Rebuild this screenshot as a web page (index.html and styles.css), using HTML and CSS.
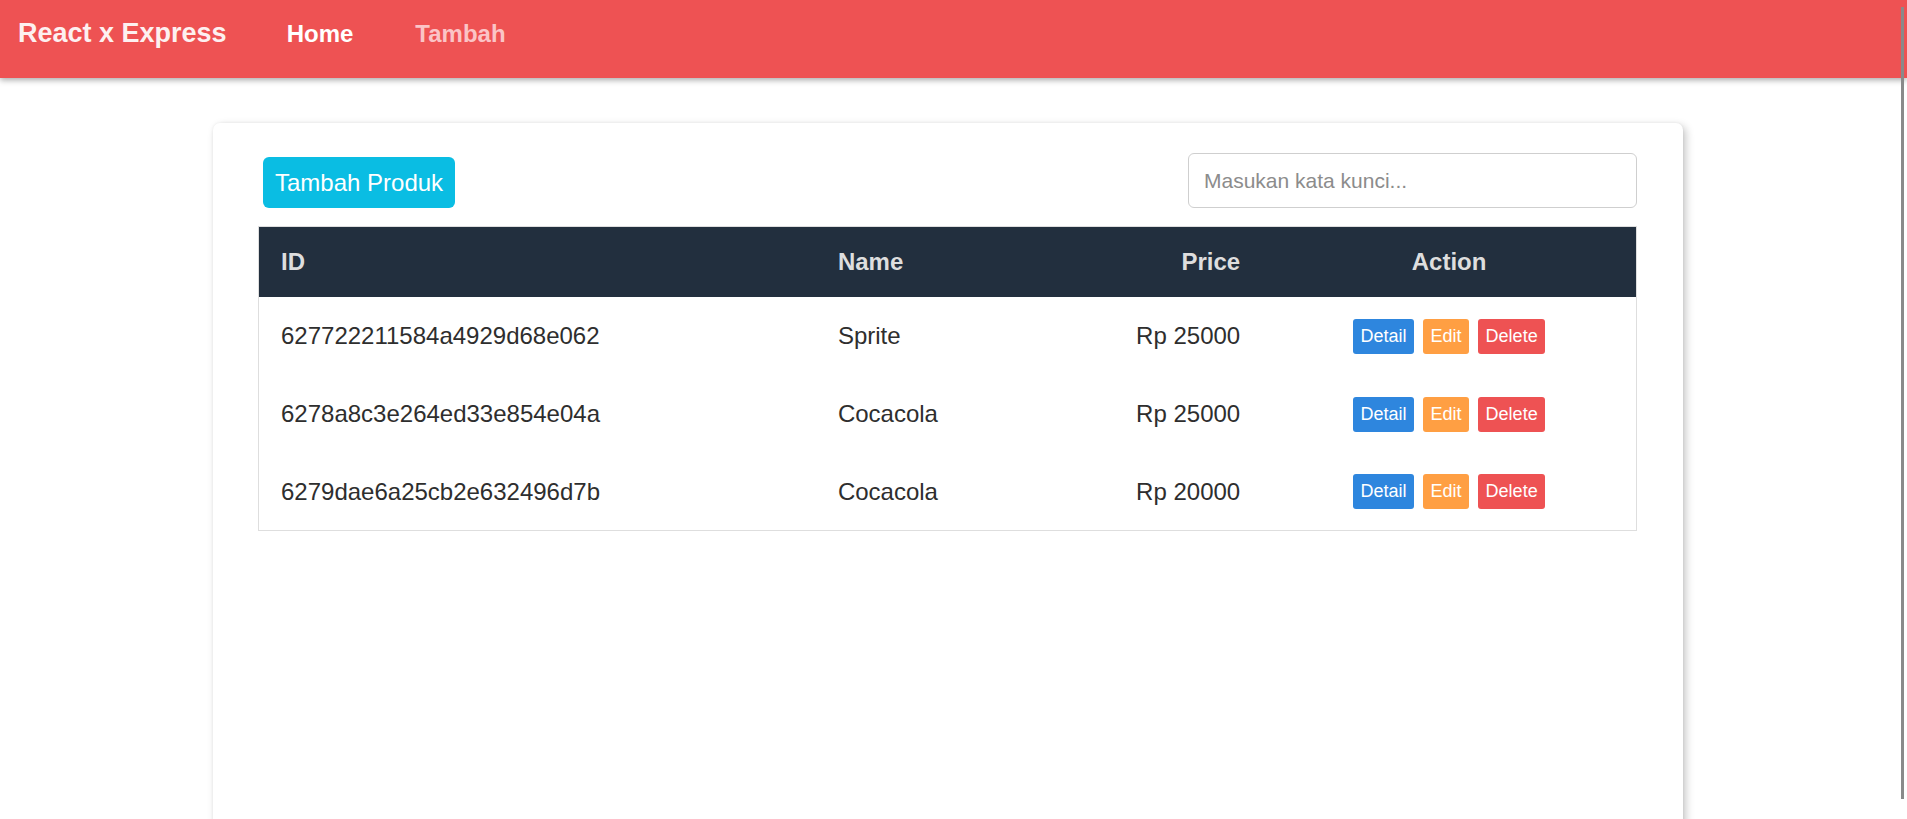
FILE: index.html
```html
<!DOCTYPE html>
<html lang="id">
<head>
<meta charset="utf-8">
<title>React x Express</title>
<link rel="stylesheet" href="styles.css">
</head>
<body>
<nav class="navbar">
  <a class="brand" href="#">React x Express</a>
  <a class="nav-link" href="#">Home</a>
  <a class="nav-link nav-link-muted" href="#">Tambah</a>
</nav>
<main class="main">
  <section class="card">
    <div class="toolbar">
      <button class="btn-add" type="button">Tambah Produk</button>
      <input class="search" type="text" placeholder="Masukan kata kunci...">
    </div>
    <table class="table">
      <colgroup>
        <col class="col-id">
        <col class="col-name">
        <col class="col-price">
        <col class="col-action">
      </colgroup>
      <thead>
        <tr>
          <th class="left">ID</th>
          <th class="left">Name</th>
          <th class="right">Price</th>
          <th class="center">Action</th>
        </tr>
      </thead>
      <tbody>
        <tr>
          <td>627722211584a4929d68e062</td>
          <td>Sprite</td>
          <td class="right">Rp 25000</td>
          <td class="center"><div class="actions"><button class="btn btn-detail">Detail</button><button class="btn btn-edit">Edit</button><button class="btn btn-delete">Delete</button></div></td>
        </tr>
        <tr>
          <td>6278a8c3e264ed33e854e04a</td>
          <td>Cocacola</td>
          <td class="right">Rp 25000</td>
          <td class="center"><div class="actions"><button class="btn btn-detail">Detail</button><button class="btn btn-edit">Edit</button><button class="btn btn-delete">Delete</button></div></td>
        </tr>
        <tr>
          <td>6279dae6a25cb2e632496d7b</td>
          <td>Cocacola</td>
          <td class="right">Rp 20000</td>
          <td class="center"><div class="actions"><button class="btn btn-detail">Detail</button><button class="btn btn-edit">Edit</button><button class="btn btn-delete">Delete</button></div></td>
        </tr>
      </tbody>
    </table>
  </section>
</main>
<div class="scroll-thumb"></div>
</body>
</html>
```

FILE: styles.css
```css
* { box-sizing: border-box; }

html, body {
  margin: 0;
  padding: 0;
}

body {
  font-family: "Liberation Sans", Arial, sans-serif;
  background: #ffffff;
  color: #2e2e2e;
  height: 819px;
  overflow: hidden;
}

.navbar {
  position: relative;
  z-index: 2;
  height: 78px;
  background: #ee5253;
  display: flex;
  align-items: baseline;
  padding: 13px 0 0 18px;
  box-shadow: 0 2px 6px rgba(0, 0, 0, 0.35);
}

.brand {
  font-size: 27px;
  line-height: 40px;
  font-weight: bold;
  color: #fdf0f0;
  text-decoration: none;
  margin-right: 60px;
}

.nav-link {
  font-size: 24px;
  line-height: 40px;
  font-weight: bold;
  color: #ffffff;
  text-decoration: none;
  margin-right: 62px;
}

.nav-link-muted {
  color: #fbc4c6;
}

.main {
  padding: 45px 11px 0 0;
}

.card {
  width: 1470px;
  height: 760px;
  margin: 0 auto;
  background: #ffffff;
  border-radius: 7px;
  box-shadow: 3px 3px 9px rgba(0, 0, 0, 0.22), 0 0 3px rgba(0, 0, 0, 0.06);
  padding: 30px 46px 0 45px;
}

.toolbar {
  display: flex;
  justify-content: space-between;
  align-items: flex-end;
}

.btn-add {
  margin-left: 5px;
  height: 51px;
  padding: 0 12px;
  font-family: inherit;
  font-size: 24px;
  color: #ffffff;
  background: #0abde3;
  border: none;
  border-radius: 6px;
}

.search {
  width: 449px;
  height: 55px;
  padding: 0 15px;
  font-family: inherit;
  font-size: 21px;
  color: #333;
  border: 1px solid #cfcfcf;
  border-radius: 6px;
  outline: none;
}

.search::placeholder {
  color: #8c8c8c;
}

.table {
  width: 1379px;
  margin-top: 18px;
  border-collapse: collapse;
  table-layout: fixed;
  border: 1px solid #dedede;
}

.col-id { width: 557px; }
.col-name { width: 223px; }
.col-price { width: 223px; }
.col-action { width: 374px; }

.table th {
  height: 70px;
  padding: 0 22px;
  background: #222f3e;
  color: #dedede;
  font-size: 24px;
  font-weight: bold;
}

.table td {
  height: 78px;
  padding: 1px 22px 0;
  font-size: 24px;
  color: #2e2e2e;
  text-align: left;
  vertical-align: middle;
}

.left { text-align: left; }
.right { text-align: right; }
.table td.right { text-align: right; }
.center { text-align: center; }
.table td.center { text-align: center; }

.actions {
  display: flex;
  justify-content: center;
  gap: 9px;
}

.btn {
  height: 35px;
  padding: 0 7.5px;
  font-family: inherit;
  font-size: 18px;
  line-height: 35px;
  color: #ffffff;
  border: none;
  border-radius: 3px;
}

.btn-detail { background: #2e86de; }
.btn-edit { background: #ff9f43; }
.btn-delete { background: #ee5253; }

.scroll-thumb {
  position: fixed;
  top: 7px;
  right: 3px;
  width: 3px;
  height: 792px;
  background: #8a8a8a;
  z-index: 5;
}
```
